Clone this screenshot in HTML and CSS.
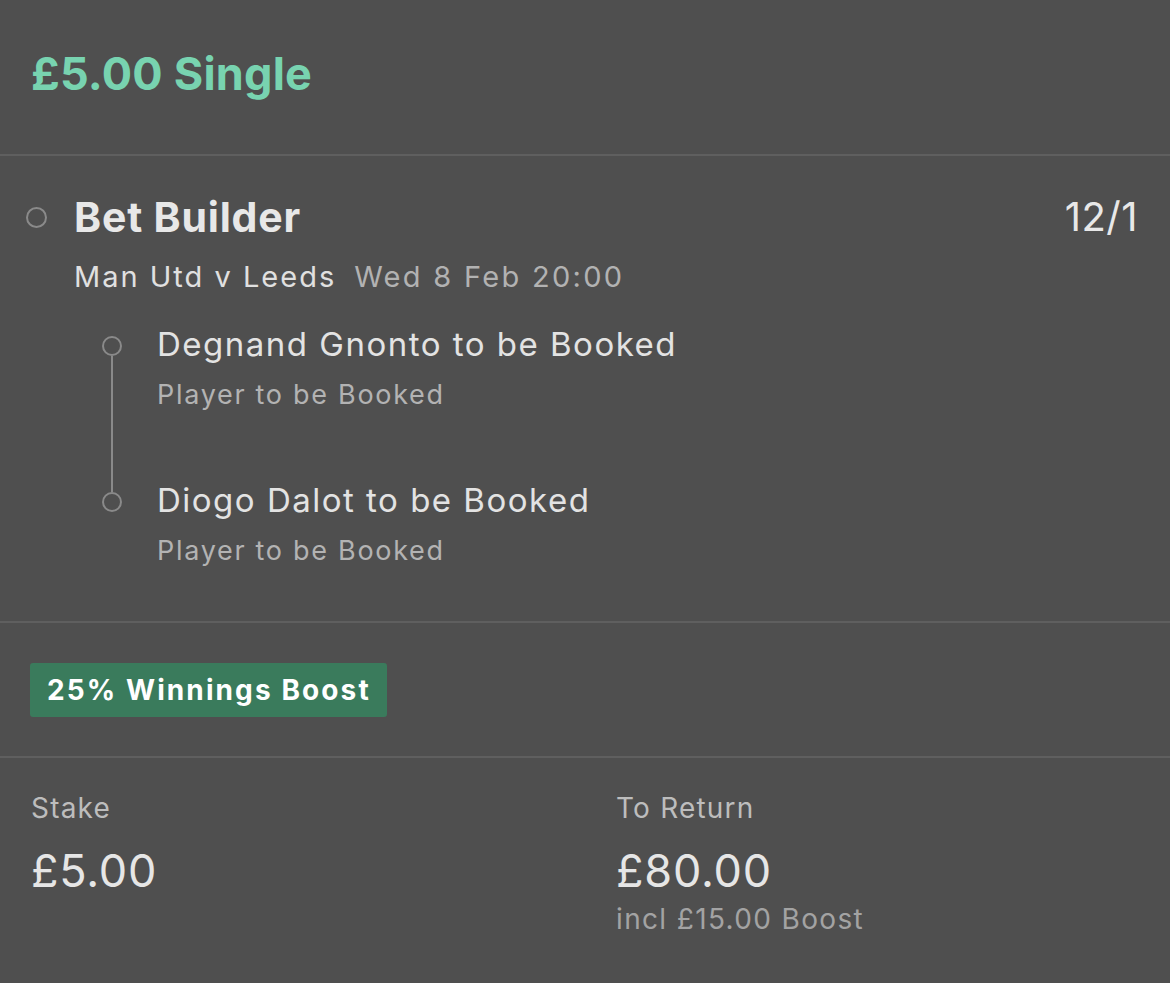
FILE: index.html
```html
<!DOCTYPE html>
<html lang="en">
<head>
<meta charset="utf-8">
<title>Bet</title>
<link rel="stylesheet" href="styles.css">
</head>
<body>
<div class="slip">
  <header class="head">
    <h1 class="title">£5.00 Single</h1>
  </header>

  <section class="bet">
    <div class="bet-row">
      <span class="ring"></span>
      <div class="bet-main">
        <div class="bet-top">
          <span class="bet-name">Bet Builder</span>
          <span class="odds">12/1</span>
        </div>
        <div class="event"><span class="teams">Man Utd v Leeds</span><span class="when">Wed 8 Feb 20:00</span></div>
        <div class="legs">
          <div class="leg">
            <span class="ring small"></span>
            <div class="leg-text">
              <div class="leg-name">Degnand Gnonto to be Booked</div>
              <div class="leg-market">Player to be Booked</div>
            </div>
          </div>
          <div class="leg">
            <span class="ring small"></span>
            <div class="leg-text">
              <div class="leg-name">Diogo Dalot to be Booked</div>
              <div class="leg-market">Player to be Booked</div>
            </div>
          </div>
        </div>
      </div>
    </div>
  </section>

  <section class="boost">
    <span class="badge">25% Winnings Boost</span>
  </section>

  <section class="totals">
    <div class="col">
      <div class="label">Stake</div>
      <div class="amount">£5.00</div>
    </div>
    <div class="col">
      <div class="label">To Return</div>
      <div class="amount">£80.00</div>
      <div class="note">incl £15.00 Boost</div>
    </div>
  </section>
</div>
</body>
</html>
```

FILE: styles.css
```css
* { box-sizing: border-box; margin: 0; padding: 0; }
html, body { background: #4f4f4f; }
body {
  width: 1170px;
  height: 983px;
  overflow: hidden;
  font-family: "Inter", "Roboto", sans-serif;
  color: #e6e6e6;
}
.slip { display: flex; flex-direction: column; }

.head {
  padding: 44px 32px 50px 31px;
  border-bottom: 2px solid #5f5f5f;
}
.title {
  font-size: 45px;
  line-height: 60px;
  font-weight: 700;
  color: #78d3b0;
  letter-spacing: 0.2px;
}

.bet {
  padding: 36px 32px 52px 26px;
  border-bottom: 2px solid #5f5f5f;
}
.bet-row { display: grid; grid-template-columns: 48px 1fr; }
.ring {
  width: 21px;
  height: 21px;
  border: 2.5px solid #8a8a8a;
  border-radius: 50%;
  margin-top: 15px;
  margin-left: 0;
}
.bet-top { display: flex; justify-content: space-between; align-items: center; height: 50px; }
.bet-name { font-size: 41px; font-weight: 700; line-height: 50px; color: #e8e8e8; letter-spacing: 0.8px; }
.odds { font-size: 40px; line-height: 50px; color: #e8e8e8; letter-spacing: 0.5px; }
.event { margin-top: 15px; font-size: 29px; line-height: 40px; display: flex; gap: 18px; letter-spacing: 2px; }
.teams { color: #e0e0e0; }
.when { color: #b2b2b2; letter-spacing: 2.3px; }

.legs {
  position: relative;
  margin-top: 25px;
  padding-left: 28px;
  display: flex;
  flex-direction: column;
  gap: 65px;
}
.legs::before {
  content: "";
  position: absolute;
  left: 36.5px;
  top: 34px;
  height: 136px;
  width: 2.5px;
  background: #8a8a8a;
}
.leg { display: grid; grid-template-columns: 55px 1fr; }
.ring.small { width: 20px; height: 20px; margin-top: 14px; }
.leg-name { font-size: 33px; line-height: 44px; color: #e3e3e3; letter-spacing: 1.5px; }
.leg-market { margin-top: 11px; font-size: 27px; line-height: 36px; color: #b3b3b3; letter-spacing: 1.7px; }

.boost {
  padding: 40px 30px 39px;
  border-bottom: 2px solid #5f5f5f;
}
.badge {
  display: inline-flex;
  align-items: center;
  height: 54px;
  padding: 0 16px 0 17px;
  background: #3a7b5c;
  border-radius: 3px;
  font-size: 28px;
  font-weight: 700;
  letter-spacing: 2.1px;
  color: #ffffff;
}

.totals {
  display: grid;
  grid-template-columns: 585px 1fr;
  padding: 32px 31px 0;
}
.label { font-size: 28px; line-height: 36px; color: #bdbdbd; letter-spacing: 1.2px; }
.amount { margin-top: 16px; font-size: 45px; line-height: 57px; color: #e6e6e6; letter-spacing: 0.8px; }
.note { margin-top: 2px; font-size: 28px; line-height: 36px; color: #a3a3a3; letter-spacing: 1.35px; }
```
